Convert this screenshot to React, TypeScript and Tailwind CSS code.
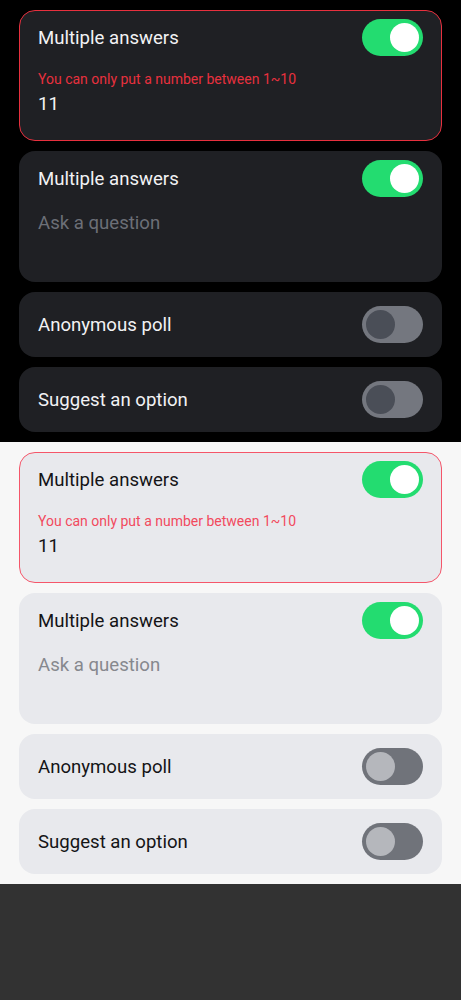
import React from 'react'

type Theme = 'dark' | 'light'

function Toggle({ on, theme }: { on: boolean; theme: Theme }) {
  const track = on ? 'bg-[#23dc70]' : theme === 'dark' ? 'bg-[#74777f]' : 'bg-[#70737a]'
  const knob = on ? 'bg-white' : theme === 'dark' ? 'bg-[#4a4e57]' : 'bg-[#b5b7bc]'
  return (
    <div className={`w-[61px] h-[37px] rounded-full flex items-center px-[4px] shrink-0 ${track} ${on ? 'justify-end' : 'justify-start'}`}>
      <div className={`w-[29px] h-[29px] rounded-full ${knob}`} />
    </div>
  )
}

function Card({
  theme,
  title,
  on,
  error,
  children,
  tall,
}: {
  theme: Theme
  title: string
  on: boolean
  error?: boolean
  tall?: boolean
  children?: React.ReactNode
}) {
  const dark = theme === 'dark'
  const bg = dark ? 'bg-[#1f2024]' : 'bg-[#e8e9ed]'
  const border = error ? (dark ? 'border-[#e8303e]' : 'border-[#f5566a]') : 'border-transparent'
  return (
    <div className={`rounded-[16px] border ${bg} ${border} ${tall ? 'h-[131px]' : 'h-[65px]'} px-[18px] ${tall ? 'pt-[8px]' : 'flex flex-col justify-center'}`}>
      <div className="flex items-center justify-between h-[37px]">
        <span className={`text-[18.6px] leading-[22px] ${dark ? 'text-[#f2f2f4]' : 'text-[#141416]'}`}>{title}</span>
        <Toggle on={on} theme={theme} />
      </div>
      {children}
    </div>
  )
}

function Section({ theme }: { theme: Theme }) {
  const dark = theme === 'dark'
  return (
    <div className={`${dark ? 'bg-black' : 'bg-[#f7f7f7]'} px-[19px] py-[10px] flex flex-col gap-[10px]`}>
      <Card theme={theme} title="Multiple answers" on error tall>
        <div className={`mt-[15px] text-[14px] leading-[17px] ${dark ? 'text-[#e8303e]' : 'text-[#f24a5e]'}`}>
          You can only put a number between 1~10
        </div>
        <div className={`mt-[5px] text-[18.6px] leading-[22px] ${dark ? 'text-[#f2f2f4]' : 'text-[#141416]'}`}>11</div>
      </Card>
      <Card theme={theme} title="Multiple answers" on tall>
        <div className={`mt-[15px] text-[18.6px] leading-[22px] ${dark ? 'text-[#6c6f77]' : 'text-[#86888e]'}`}>Ask a question</div>
      </Card>
      <Card theme={theme} title="Anonymous poll" on={false} />
      <Card theme={theme} title="Suggest an option" on={false} />
    </div>
  )
}

export default function App() {
  return (
    <div className="min-h-screen bg-[#323232]" style={{ fontFamily: 'Roboto, "Noto Sans", sans-serif' }}>
      <Section theme="dark" />
      <Section theme="light" />
    </div>
  )
}
